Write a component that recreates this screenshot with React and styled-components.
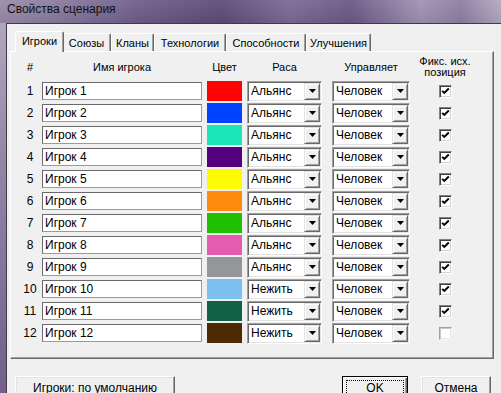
import styled, { createGlobalStyle } from "styled-components";

const players = [
  { color: "#ff0303", race: "Альянс", fixed: true },
  { color: "#0042ff", race: "Альянс", fixed: true },
  { color: "#1ce6b9", race: "Альянс", fixed: true },
  { color: "#540081", race: "Альянс", fixed: true },
  { color: "#fffc01", race: "Альянс", fixed: true },
  { color: "#fe8a0e", race: "Альянс", fixed: true },
  { color: "#20c000", race: "Альянс", fixed: true },
  { color: "#e55bb0", race: "Альянс", fixed: true },
  { color: "#959697", race: "Альянс", fixed: true },
  { color: "#7ebff1", race: "Нежить", fixed: true },
  { color: "#106246", race: "Нежить", fixed: true },
  { color: "#4e2a04", race: "Нежить", fixed: false },
];

const tabs = [
  { label: "Игроки", width: 45 },
  { label: "Союзы", width: 49 },
  { label: "Кланы", width: 43 },
  { label: "Технологии", width: 72 },
  { label: "Способности", width: 80 },
  { label: "Улучшения", width: 65 },
];

export default function App() {
  return (
    <Window>
      <GlobalStyle />
      <TitleBar>Свойства сценария</TitleBar>
      <Body>
        <Frame />
        <Client>
          <TabStrip>
            {tabs.map((t, i) => (
              <Tab key={t.label} $active={i === 0} $width={t.width}>
                {t.label}
              </Tab>
            ))}
          </TabStrip>
          <Panel>
            <Table>
              <Head>#</Head>
              <Head>Имя игрока</Head>
              <Head $end>Цвет</Head>
              <Head $end>Раса</Head>
              <Head $end>Управляет</Head>
              <Head>
                Фикс. исх.
                <br />
                позиция
              </Head>
              {players.map((p, i) => (
                <Row key={i}>
                  <Num>{i + 1}</Num>
                  <NameInput readOnly defaultValue={`Игрок ${i + 1}`} />
                  <Swatch $color={p.color} />
                  <Combo $width={75}>
                    <span>{p.race}</span>
                    <ArrowBtn>
                      <svg width="7" height="4" viewBox="0 0 7 4">
                        <polygon points="0,0 7,0 3.5,4" fill="#000" />
                      </svg>
                    </ArrowBtn>
                  </Combo>
                  <Combo $width={78}>
                    <span>Человек</span>
                    <ArrowBtn>
                      <svg width="7" height="4" viewBox="0 0 7 4">
                        <polygon points="0,0 7,0 3.5,4" fill="#000" />
                      </svg>
                    </ArrowBtn>
                  </Combo>
                  <CheckCell>
                    <CheckBox $off={!p.fixed}>
                      {p.fixed && (
                        <svg width="9" height="9" viewBox="0 0 9 9">
                          <polyline
                            points="1.2,3.8 3.3,6 7.8,1.5"
                            fill="none"
                            stroke="#000"
                            strokeWidth="1.9"
                          />
                        </svg>
                      )}
                    </CheckBox>
                  </CheckCell>
                </Row>
              ))}
            </Table>
          </Panel>
          <ButtonRow>
            <Button $width={160}>Игроки: по умолчанию</Button>
            <Spacer />
            <Button $width={66} $default>
              <Focus>OK</Focus>
            </Button>
            <Button $width={70}>Отмена</Button>
          </ButtonRow>
        </Client>
      </Body>
    </Window>
  );
}

const GlobalStyle = createGlobalStyle`
  html, body {
    margin: 0;
    padding: 0;
    overflow: hidden;
    background: #f0f0f0;
  }
  body {
    font-family: "Liberation Sans", Arial, sans-serif;
    font-size: 11px;
    color: #000;
  }
`;

const Window = styled.div`
  width: 501px;
  height: 393px;
  display: flex;
  flex-direction: column;
  overflow: hidden;
`;

const TitleBar = styled.div`
  height: 23px;
  flex-shrink: 0;
  padding-left: 7px;
  line-height: 19px;
  font-size: 12px;
  color: #111;
  background:
    linear-gradient(180deg, rgba(255, 255, 255, 0.08), rgba(0, 0, 0, 0.05)),
    linear-gradient(
      90deg,
      #978aa7 0%,
      #8a7b9e 10%,
      #6e5b88 28%,
      #5d4977 44%,
      #7b6895 58%,
      #6a5684 70%,
      #a090b2 84%,
      #8d7ca2 92%,
      #b2a7bf 100%
    );
`;

const Body = styled.div`
  flex: 1;
  display: flex;
`;

const Frame = styled.div`
  width: 6px;
  flex-shrink: 0;
  background: linear-gradient(180deg, #b1a6bd 0%, #9586a8 35%, #725e8a 100%);
`;

const Client = styled.div`
  flex: 1;
  display: flex;
  flex-direction: column;
  background: #f0f0f0;
  border-top: 1px solid #3e3a46;
  border-left: 1px solid #3e3a46;
  padding: 7px 7px 0 3px;
`;

const TabStrip = styled.div`
  height: 20px;
  display: flex;
  align-items: flex-end;
  padding-left: 7px;
  position: relative;
  z-index: 1;
`;

const Tab = styled.div`
  width: ${(p) => p.$width + (p.$active ? 4 : 0)}px;
  height: ${(p) => (p.$active ? 21 : 18)}px;
  margin: 0 ${(p) => (p.$active ? "-2px" : "0")};
  margin-bottom: ${(p) => (p.$active ? "-1px" : "0")};
  box-sizing: border-box;
  display: flex;
  align-items: center;
  justify-content: center;
  padding-bottom: ${(p) => (p.$active ? "3px" : "0")};
  background: #f0f0f0;
  border-top: 1px solid #fff;
  border-left: 1px solid #fff;
  border-right: 1px solid #696969;
  border-radius: 2px 2px 0 0;
  box-shadow: inset -1px 0 #a0a0a0;
  position: relative;
  z-index: ${(p) => (p.$active ? 2 : 0)};
`;

const Panel = styled.div`
  width: 484px;
  box-sizing: border-box;
  height: 308px;
  border-top: 1px solid #fff;
  border-left: 1px solid #fff;
  border-right: 1px solid #696969;
  border-bottom: 1px solid #696969;
  box-shadow: inset -1px -1px #a0a0a0;
  padding: 2px 0 0 1px;
`;

const Table = styled.div`
  display: grid;
  grid-template-columns: 30px 160px 40px 80px 88px 70px;
  grid-template-rows: 26px;
  grid-auto-rows: 22px;
`;

const Head = styled.div`
  display: flex;
  align-items: center;
  justify-content: center;
  text-align: center;
  line-height: 11px;
  padding-left: ${(p) => (p.$end ? "5px" : "0")};
  &:first-child {
    padding-left: 6px;
  }
  &:nth-child(5) {
    padding-left: 10px;
  }
`;

const Row = styled.div`
  display: contents;
`;

const Num = styled.div`
  display: flex;
  align-items: center;
  justify-content: center;
  padding-left: 6px;
  font-size: 12px;
`;

const NameInput = styled.input`
  align-self: center;
  width: 160px;
  height: 18px;
  box-sizing: border-box;
  margin: 0;
  padding: 0 2px;
  border: 1px solid #7a7a7a;
  border-color: #6a6a6a #9a9a9a #9a9a9a #6a6a6a;
  background: #fff;
  font: 12px "Liberation Sans", Arial, sans-serif;
  color: #000;
  outline: none;
`;

const Swatch = styled.div`
  justify-self: end;
  align-self: center;
  width: 35px;
  height: 20px;
  background: ${(p) => p.$color};
`;

const Combo = styled.div`
  justify-self: end;
  align-self: center;
  width: ${(p) => p.$width}px;
  height: 21px;
  box-sizing: border-box;
  display: flex;
  align-items: center;
  background: #fff;
  border: 1px solid;
  border-color: #a0a0a0 #fff #fff #a0a0a0;
  box-shadow: inset 1px 1px #696969, inset -1px -1px #e3e3e3;
  padding: 1px;
  font-size: 12px;
  span {
    flex: 1;
    padding-left: 2px;
  }
`;

const ArrowBtn = styled.div`
  width: 16px;
  height: 17px;
  box-sizing: border-box;
  display: flex;
  align-items: center;
  justify-content: center;
  background: #f0f0f0;
  border: 1px solid;
  border-color: #e3e3e3 #696969 #696969 #e3e3e3;
  box-shadow: inset 1px 1px #fff, inset -1px -1px #a0a0a0;
`;

const CheckCell = styled.div`
  display: flex;
  align-items: center;
  justify-content: center;
`;

const CheckBox = styled.div`
  width: 13px;
  height: 13px;
  box-sizing: border-box;
  display: flex;
  align-items: center;
  justify-content: center;
  background: #fff;
  border: 1px solid;
  border-color: ${(p) =>
    p.$off ? "#a0a0a0 #f4f4f4 #f4f4f4 #a0a0a0" : "#808080 #fff #fff #808080"};
  box-shadow: ${(p) =>
    p.$off
      ? "inset 1px 1px #c8c8c8, inset -1px -1px #e8e8e8"
      : "inset 1px 1px #404040, inset -1px -1px #d4d4d4"};
`;

const ButtonRow = styled.div`
  display: flex;
  gap: 13px;
  margin-top: 17px;
  padding: 0 3px 0 5px;
`;

const Spacer = styled.div`
  flex: 1;
`;

const Button = styled.div`
  width: ${(p) => p.$width}px;
  height: 23px;
  box-sizing: border-box;
  display: flex;
  align-items: center;
  justify-content: center;
  font-size: 12px;
  background: #f0f0f0;
  border: 1px solid;
  border-color: ${(p) =>
    p.$default ? "#000" : "#fff #696969 #696969 #fff"};
  box-shadow: ${(p) =>
    p.$default
      ? "inset 1px 1px #fff, inset -1px -1px #696969, inset -2px -2px #a0a0a0"
      : "inset -1px -1px #a0a0a0, inset 1px 1px #e3e3e3"};
  padding: 3px;
`;

const Focus = styled.div`
  align-self: stretch;
  flex: 1;
  display: flex;
  align-items: center;
  justify-content: center;
  border: 1px dotted #000;
`;
